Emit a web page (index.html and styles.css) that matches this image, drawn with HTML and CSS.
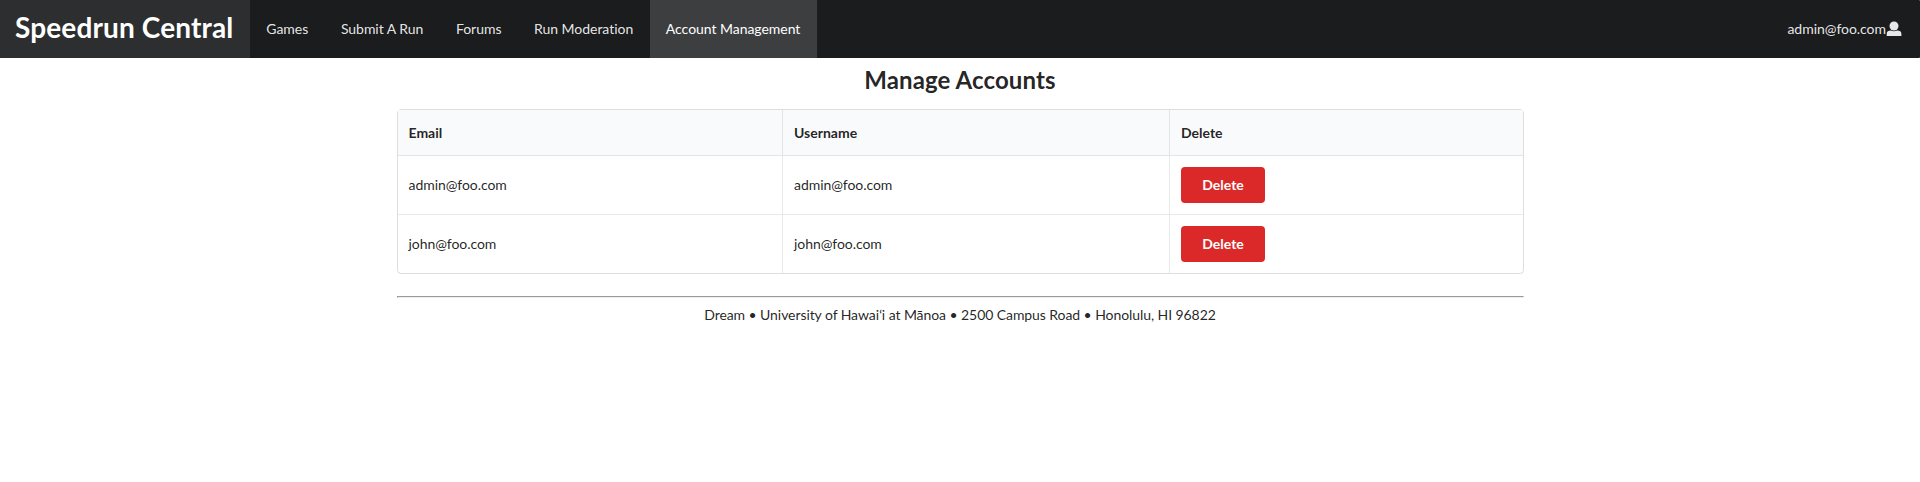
FILE: index.html
```html
<!DOCTYPE html>
<html lang="en">
<head>
<meta charset="utf-8">
<title>Speedrun Central</title>
<link rel="stylesheet" href="styles.css">
</head>
<body>
<nav class="menu">
  <a class="item brand">Speedrun Central</a>
  <a class="item">Games</a>
  <a class="item">Submit A Run</a>
  <a class="item">Forums</a>
  <a class="item">Run Moderation</a>
  <a class="item active">Account Management</a>
  <a class="item account">admin@foo.com<svg class="user-icon" viewBox="0 0 16 16"><circle cx="8" cy="5" r="4.500"/><path d="M.7 15V13c0-2.400 1.600-3.400 4-3.400 2 1 4.600 1 6.600 0 2.400 0 4.100 1 4.100 3.400v2z"/></svg></a>
</nav>
<main class="container">
  <h2 class="title">Manage Accounts</h2>
  <table class="accounts">
    <thead>
      <tr><th class="email">Email</th><th class="username">Username</th><th>Delete</th></tr>
    </thead>
    <tbody>
      <tr><td>admin@foo.com</td><td>admin@foo.com</td><td><button class="delete">Delete</button></td></tr>
      <tr><td>john@foo.com</td><td>john@foo.com</td><td><button class="delete">Delete</button></td></tr>
    </tbody>
  </table>
  <hr class="rule">
  <footer class="footer">Dream • University of Hawaiʻi at Mānoa • 2500 Campus Road • Honolulu, HI 96822</footer>
</main>
</body>
</html>
```
FILE: styles.css
```css
* { box-sizing: border-box; }
body {
  margin: 0;
  background: #fff;
  color: rgba(0, 0, 0, .87);
  font: 14px/20px Lato, "Noto Sans", sans-serif;
}
.menu {
  display: flex;
  height: 58px;
  background: #1b1c1d;
  border-radius: 1px;
}
.item {
  display: flex;
  align-items: center;
  padding: 0 16.4px 0 16.3px;
  color: rgba(255, 255, 255, .9);
  letter-spacing: -.04px;
  white-space: nowrap;
}
.brand {
  width: 250px;
  padding: 0 0 4px 15px;
  background: #2d2e2f;
  color: #fff;
  font-size: 28px;
  font-weight: 700;
  letter-spacing: .13px;
}
.active {
  background: #3d3e3f;
  color: #fff;
}
.account {
  margin-left: auto;
  padding-right: 18px;
}
.user-icon {
  width: 16px;
  height: 16px;
  fill: #e8e8e8;
}
.container {
  width: 1127px;
  margin: 0 auto;
}
.title {
  margin: 0;
  padding: 6px 0 14px;
  font-size: 24px;
  line-height: 31px;
  font-weight: 700;
  letter-spacing: .1px;
  text-align: center;
}
.accounts {
  width: 100%;
  border: 1px solid rgba(34, 36, 38, .15);
  border-radius: 4px;
  border-collapse: separate;
  border-spacing: 0;
  table-layout: fixed;
}
.accounts th,
.accounts td {
  padding: 11px;
  border-left: 1px solid rgba(34, 36, 38, .1);
  text-align: left;
  vertical-align: middle;
}
.accounts th:first-child,
.accounts td:first-child { border-left: 0; }
.accounts th {
  height: 46px;
  background: #f9fafb;
  border-bottom: 1px solid rgba(34, 36, 38, .1);
}
.accounts td {
  height: 59px;
  letter-spacing: -.06px;
}
.accounts tr + tr td { border-top: 1px solid rgba(34, 36, 38, .1); }
.accounts tbody tr:first-child td { height: 58px; }
.email { width: 384.5px; }
.username { width: 387px; }
.delete {
  display: block;
  width: 84px;
  height: 36px;
  padding: 0;
  border: 0;
  border-radius: 4px;
  background: #db2828;
  color: #fff;
  font: 700 14px/14px Lato, sans-serif;
}
.rule {
  margin: 22px 0 7px;
}
.footer {
  letter-spacing: -.075px;
  text-align: center;
}
```
